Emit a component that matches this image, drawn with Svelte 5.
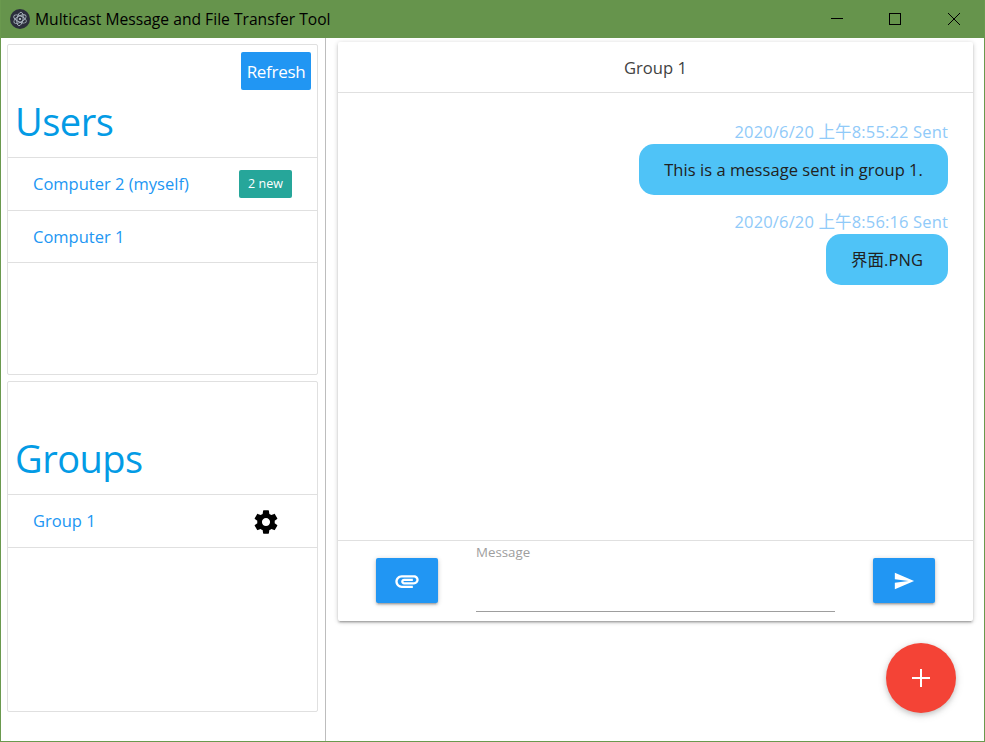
<script>
  const users = [
    { name: 'Computer 2 (myself)', badge: '2 new' },
    { name: 'Computer 1' }
  ];
  const messages = [
    { time: '2020/6/20 上午8:55:22 Sent', text: 'This is a message sent in group 1.' },
    { time: '2020/6/20 上午8:56:16 Sent', text: '界面.PNG' }
  ];
</script>

<div class="window">
  <header class="titlebar">
    <svg class="logo" viewBox="0 0 20 20" width="20" height="20">
      <circle cx="10" cy="10" r="10" fill="#2b2e3b" />
      <g fill="none" stroke="#a9b4bd" stroke-width="0.9">
        <ellipse cx="10" cy="10" rx="6.8" ry="3" transform="rotate(25 10 10)" />
        <ellipse cx="10" cy="10" rx="6.8" ry="3" transform="rotate(100 10 10)" />
        <ellipse cx="10" cy="10" rx="6.8" ry="3" transform="rotate(150 10 10)" />
      </g>
      <circle cx="10" cy="10" r="1.1" fill="#c4ced6" />
    </svg>
    <span class="title">Multicast Message and File Transfer Tool</span>
    <div class="controls">
      <button class="ctl" aria-label="Minimize">
        <svg width="12" height="12" viewBox="0 0 12 12"><path d="M0 5.5h12" stroke="#000" fill="none" /></svg>
      </button>
      <button class="ctl" aria-label="Maximize">
        <svg width="12" height="12" viewBox="0 0 12 12"><rect x="0.5" y="0.5" width="11" height="11" stroke="#000" fill="none" /></svg>
      </button>
      <button class="ctl close" aria-label="Close">
        <svg width="12" height="12" viewBox="0 0 12 12"><path d="M0 0l12 12M12 0L0 12" stroke="#000" stroke-width="1" fill="none" /></svg>
      </button>
    </div>
  </header>

  <div class="main">
    <aside class="sidebar">
      <section class="panel">
        <div class="panel-top">
          <button class="refresh">Refresh</button>
        </div>
        <h2>Users</h2>
        <ul>
          {#each users as u}
            <li>
              <a href="#top">{u.name}</a>
              {#if u.badge}<span class="badge">{u.badge}</span>{/if}
            </li>
          {/each}
        </ul>
      </section>
      <section class="panel">
        <div class="panel-top"></div>
        <h2>Groups</h2>
        <ul>
          <li>
            <a href="#top">Group 1</a>
            <svg class="gear" viewBox="0 0 24 24" width="28" height="28">
              <path d="M19.43 12.98c.04-.32.07-.64.07-.98s-.03-.66-.07-.98l2.11-1.65c.19-.15.24-.42.12-.64l-2-3.46c-.12-.22-.39-.3-.61-.22l-2.49 1c-.52-.4-1.08-.73-1.69-.98l-.38-2.65C14.46 2.18 14.25 2 14 2h-4c-.25 0-.46.18-.49.42l-.38 2.65c-.61.25-1.17.59-1.69.98l-2.49-1c-.23-.09-.49 0-.61.22l-2 3.46c-.13.22-.07.49.12.64l2.11 1.65c-.04.32-.07.65-.07.98s.03.66.07.98l-2.11 1.65c-.19.15-.24.42-.12.64l2 3.46c.12.22.39.3.61.22l2.49-1c.52.4 1.08.73 1.69.98l.38 2.65c.03.24.24.42.49.42h4c.25 0 .46-.18.49-.42l.38-2.65c.61-.25 1.17-.59 1.69-.98l2.49 1c.23.09.49 0 .61-.22l2-3.46c.12-.22.07-.49-.12-.64l-2.11-1.65zM12 15.5c-1.93 0-3.5-1.57-3.5-3.5s1.57-3.5 3.5-3.5 3.5 1.57 3.5 3.5-1.57 3.5-3.5 3.5z" fill="#000" />
            </svg>
          </li>
        </ul>
      </section>
    </aside>

    <main class="content">
      <section class="chat">
        <div class="chat-head">Group 1</div>
        <div class="chat-body">
          {#each messages as m}
            <div class="time">{m.time}</div>
            <div class="bubble">{m.text}</div>
          {/each}
        </div>
        <div class="chat-foot">
          <button class="action" aria-label="Attach">
            <svg viewBox="0 0 24 24" width="28" height="28">
              <path d="M2 12.5C2 9.46 4.46 7 7.5 7H18c2.21 0 4 1.79 4 4s-1.79 4-4 4H9.5C8.12 15 7 13.88 7 12.5S8.12 10 9.5 10H17v2H9.41c-.55 0-.55 1 0 1H18c1.1 0 2-.9 2-2s-.9-2-2-2H7.5C5.57 9 4 10.57 4 12.5S5.57 16 7.5 16H17v2H7.5C4.46 18 2 15.54 2 12.5z" fill="#fff" />
            </svg>
          </button>
          <div class="field">
            <span class="label">Message</span>
            <div class="underline"></div>
          </div>
          <button class="action" aria-label="Send">
            <svg viewBox="0 0 24 24" width="22" height="22">
              <path d="M2.01 21L23 12 2.01 3 2 10l15 2-15 2z" fill="#fff" />
            </svg>
          </button>
        </div>
      </section>
    </main>
  </div>

  <button class="fab" aria-label="Add">
    <svg viewBox="0 0 18 18" width="18" height="18"><path d="M0 9h18M9 0v18" stroke="#fff" stroke-width="2" fill="none" /></svg>
  </button>
</div>

<style>
  :global(body) {
    margin: 0;
    background: #fff;
  }
  .window {
    position: relative;
    box-sizing: border-box;
    width: 985px;
    height: 742px;
    display: flex;
    flex-direction: column;
    border: 1px solid #6a994e;
    border-top: none;
    font-family: "Open Sans", "Noto Sans CJK SC", sans-serif;
    overflow: hidden;
    background: #fff;
  }
  .titlebar {
    flex: 0 0 38px;
    display: flex;
    align-items: center;
    margin: 0 -1px;
    padding-left: 10px;
    background: #66944c;
    color: #000;
  }
  .logo { margin-right: 5px; }
  .title { font-size: 15.65px; white-space: nowrap; }
  .controls { margin-left: auto; display: flex; padding-right: 1px; }
  .ctl {
    width: 58px;
    height: 38px;
    padding: 0;
    border: none;
    background: none;
    display: flex;
    align-items: center;
    justify-content: center;
  }
  .close { width: 60px; }
  .main { flex: 1; display: flex; min-height: 0; }
  .sidebar {
    box-sizing: border-box;
    flex: 0 0 325px;
    padding: 6px 7px 0 6px;
    border-right: 1px solid #bdbdbd;
    display: flex;
    flex-direction: column;
    gap: 6px;
  }
  .panel {
    box-sizing: border-box;
    height: 331px;
    border: 1px solid #e0e0e0;
    border-radius: 2px;
    display: flex;
    flex-direction: column;
  }
  .panel-top {
    flex: 0 0 45px;
    display: flex;
    justify-content: flex-end;
    align-items: flex-end;
    padding-right: 6px;
  }
  .refresh {
    width: 70px;
    height: 38px;
    padding: 0;
    border: none;
    border-radius: 2px;
    background: #2196f3;
    color: #fff;
    font: 17px "Open Sans", sans-serif;
    letter-spacing: -0.3px;
  }
  h2 {
    margin: 0;
    height: 67px;
    padding-left: 7px;
    font-size: 38px;
    font-weight: 400;
    line-height: 63px;
    color: #039be5;
    letter-spacing: -0.5px;
  }
  ul { margin: 0; padding: 0; list-style: none; }
  li {
    box-sizing: border-box;
    height: 52.5px;
    padding: 0 25px;
    border-top: 1px solid #e0e0e0;
    display: flex;
    align-items: center;
    justify-content: space-between;
  }
  li:last-child { border-bottom: 1px solid #e0e0e0; height: 53.5px; }
  a {
    color: #2196f3;
    text-decoration: none;
    font-size: 16.5px;
    line-height: 24px;
    padding-top: 0.5px;
  }
  .badge {
    width: 53px;
    height: 28px;
    border-radius: 2px;
    background: #26a69a;
    color: #fff;
    font-size: 12.5px;
    line-height: 28px;
    text-align: center;
  }
  .gear { margin: 2px 12px 0 0; }
  .content {
    flex: 1;
    padding: 4px 11px 0 12px;
  }
  .chat {
    box-sizing: border-box;
    height: 579px;
    background: #fff;
    border-radius: 2px;
    box-shadow: 0 2px 2px rgba(0,0,0,.14), 0 3px 1px -2px rgba(0,0,0,.12), 0 1px 5px rgba(0,0,0,.2);
    display: flex;
    flex-direction: column;
  }
  .chat-head {
    flex: 0 0 51px;
    box-sizing: border-box;
    padding-top: 1px;
    border-bottom: 1px solid #e0e0e0;
    text-align: center;
    line-height: 49px;
    font-size: 16.6px;
    color: #424242;
  }
  .chat-body {
    flex: 1;
    padding: 28px 25px 0;
    display: flex;
    flex-direction: column;
    align-items: flex-end;
  }
  .time {
    font-size: 16.5px;
    line-height: 21px;
    margin-bottom: 2px;
    color: #90caf9;
    letter-spacing: 0.15px;
  }
  .bubble {
    box-sizing: border-box;
    height: 51px;
    margin-bottom: 16px;
    padding: 0 25px;
    border-radius: 15px;
    background: #4fc3f7;
    color: #212121;
    font-size: 16.5px;
    line-height: 52px;
    letter-spacing: 0.05px;
  }
  .chat-foot {
    flex: 0 0 81px;
    box-sizing: border-box;
    border-top: 1px solid #e0e0e0;
    padding: 0 38px;
    display: flex;
    align-items: flex-start;
    justify-content: space-between;
  }
  .action {
    width: 62px;
    height: 45px;
    margin-top: 17px;
    padding: 0;
    border: none;
    border-radius: 2px;
    background: #2196f3;
    box-shadow: 0 2px 2px rgba(0,0,0,.14), 0 3px 1px -2px rgba(0,0,0,.12), 0 1px 5px rgba(0,0,0,.2);
    display: flex;
    align-items: center;
    justify-content: center;
  }
  .field {
    width: 359px;
    height: 71px;
    display: flex;
    flex-direction: column;
    justify-content: space-between;
  }
  .label {
    font-size: 13.3px;
    line-height: 22px;
    color: #9e9e9e;
  }
  .underline { border-bottom: 1px solid #9e9e9e; }
  .fab {
    position: absolute;
    left: 885px;
    top: 643px;
    width: 70px;
    height: 70px;
    padding: 0;
    border: none;
    border-radius: 50%;
    background: #f44336;
    box-shadow: 0 2px 5px rgba(0,0,0,.16), 0 2px 10px rgba(0,0,0,.12);
    display: flex;
    align-items: center;
    justify-content: center;
  }
</style>
